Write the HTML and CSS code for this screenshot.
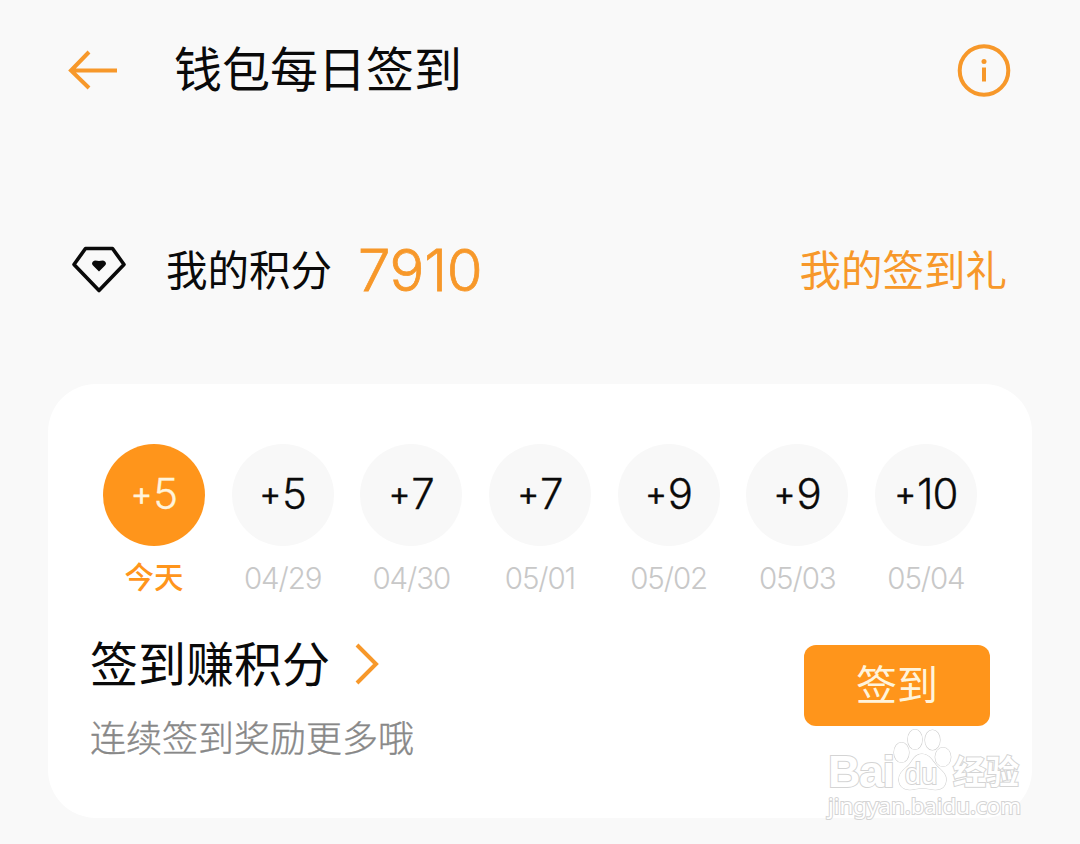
FILE: index.html
```html
<!DOCTYPE html>
<html lang="zh-CN">
<head>
    <meta charset="UTF-8">
    <meta name="viewport" content="width=device-width, initial-scale=1.0">
    <title>钱包每日签到</title>
    <link rel="stylesheet" href="styles.css">
</head>
<body>
    <header class="header">
        <svg class="back" viewBox="0 0 50 40" width="50" height="40">
            <path d="M22 2L4 20.5L22 38M4 20.5H50"/>
        </svg>
        <h1>钱包每日签到</h1>
        <svg class="info" viewBox="0 0 54 54" width="54" height="54">
            <circle cx="27" cy="27.5" r="24.3"/>
            <path d="M27 24.5V38.5"/>
            <circle class="dot" cx="27" cy="18.5" r="2.5"/>
        </svg>
    </header>

    <section class="points">
        <svg class="diamond" viewBox="0 0 56 48" width="56" height="48">
            <path d="M14.5 2.5H41.5L53 18.5L28 44.5L3 18.5Z"/>
            <path class="heart" d="M24 14.5Q26.5 14.5 28 15Q29.5 14.5 32 14.5Q35 15 35 18L34 19.5L28 25.5L22 19.5L21 18Q21 15 24 14.5Z"/>
        </svg>
        <span class="points-label">我的积分</span>
        <span class="points-value">7910</span>
        <a class="gift-link">我的签到礼</a>
    </section>

    <main class="card">
        <ul class="days">
            <li class="day today"><span class="bonus"><span class="plus">+</span>5</span><span class="date">今天</span></li>
            <li class="day"><span class="bonus"><span class="plus">+</span>5</span><span class="date">04/29</span></li>
            <li class="day"><span class="bonus"><span class="plus">+</span>7</span><span class="date">04/30</span></li>
            <li class="day"><span class="bonus"><span class="plus">+</span>7</span><span class="date">05/01</span></li>
            <li class="day"><span class="bonus"><span class="plus">+</span>9</span><span class="date">05/02</span></li>
            <li class="day"><span class="bonus"><span class="plus">+</span>9</span><span class="date">05/03</span></li>
            <li class="day"><span class="bonus"><span class="plus">+</span>10</span><span class="date">05/04</span></li>
        </ul>

        <div class="checkin">
            <div class="checkin-text">
                <h2><span class="title">签到赚积分</span>
                    <svg class="arrow" viewBox="0 0 26 42" width="26" height="42">
                        <path d="M2 2L21 21L2 40"/>
                    </svg>
                </h2>
                <p>连续签到奖励更多哦</p>
            </div>
            <button>签到</button>
        </div>
    </main>

    <div class="watermark">
        <div class="brand">
            <span class="bai">Bai</span>
            <span class="paw">
                <svg viewBox="0 0 60 64" width="60" height="64">
                    <ellipse cx="8.5" cy="24.5" rx="7.5" ry="10"/>
                    <ellipse cx="22" cy="11.5" rx="7.2" ry="10"/>
                    <ellipse cx="39.5" cy="12" rx="7.5" ry="10"/>
                    <ellipse cx="50" cy="29" rx="7.8" ry="9.5"/>
                    <path d="M29 26C22 26 20 32 16 37C12 41 5 45 6 53C7 61 15 63 22 61C27 60 32 60 37 61C45 63 52 61 53 53C54 45 47 42 43 37C39 32 36 26 29 26Z"/>
                </svg>
                <span class="du">du</span>
            </span>
            <span class="jingyan">经验</span>
        </div>
        <div class="site">jingyan.baidu.com</div>
    </div>
</body>
</html>
```

FILE: styles.css
```css
* {
    box-sizing: border-box;
}

body {
    font-family: Inter, 'Noto Sans CJK SC', sans-serif;
    width: 1080px;
    height: 844px;
    margin: 0;
    background-color: #f9f9f9;
    color: #0a0a0a;
    overflow: hidden;
}

svg {
    display: block;
    flex: none;
    fill: none;
    stroke: #f7982a;
    stroke-width: 4;
}

.header {
    display: flex;
    align-items: center;
    height: 140px;
    padding: 0 69px 0 67px;
}

h1,
h2 {
    margin: 0;
    font-family: 'Noto Sans CJK SC', sans-serif;
    font-size: 48px;
    line-height: 64px;
    font-weight: 400;
}

h1 {
    margin-left: 57px;
    padding-bottom: 8px;
}

.info {
    margin-left: auto;
}

.info .dot {
    fill: #f7982a;
    stroke: none;
}

.points {
    display: flex;
    align-items: center;
    height: 60px;
    margin-top: 100px;
    padding: 0 73px 0 71px;
    font-family: 'Noto Sans CJK SC', sans-serif;
    font-size: 41.5px;
    line-height: 60px;
}

.points .diamond {
    stroke: #0a0a0a;
    stroke-width: 3.6;
    stroke-linejoin: round;
}

.diamond .heart {
    fill: #0a0a0a;
    stroke: none;
}

.points-label {
    margin-left: 39px;
    padding-bottom: 4px;
}

.points-value {
    margin-left: 26px;
    font-family: Inter, sans-serif;
    font-size: 58px;
    font-weight: 300;
    letter-spacing: -0.3px;
    color: #f7982a;
    -webkit-text-stroke: 0.8px;
}

.gift-link {
    margin-left: auto;
    padding-bottom: 4px;
    color: #f7982a;
}

.card {
    width: 984px;
    height: 434px;
    margin: 84px auto 0;
    padding: 60px 42px 0;
    background-color: #fff;
    border-radius: 48px;
}

.days {
    display: flex;
    justify-content: space-between;
    margin: 0;
    padding: 0 13px;
    list-style: none;
}

.day {
    display: flex;
    flex-direction: column;
    align-items: center;
    width: 102px;
}

.bonus {
    display: flex;
    align-items: center;
    justify-content: center;
    width: 102px;
    height: 102px;
    padding-bottom: 3px;
    border-radius: 50%;
    background-color: #f8f8f8;
    font-size: 42px;
    font-weight: 300;
    letter-spacing: -1px;
    -webkit-text-stroke: 0.3px;
}

.plus {
    margin-right: 2px;
    padding-bottom: 1px;
    font-size: 33px;
    -webkit-text-stroke: 0.8px;
}

.date {
    height: 40px;
    margin-top: 12px;
    font-size: 29.5px;
    font-weight: 300;
    letter-spacing: -1.1px;
    line-height: 40px;
    color: #c8c8c8;
}

.today .bonus {
    background-color: #ff951b;
    color: #fff4dc;
}

.today .date {
    color: #ff951b;
    font-family: 'Noto Sans CJK SC', sans-serif;
    font-weight: 500;
    letter-spacing: 0;
    line-height: 35px;
}

.checkin {
    display: flex;
    justify-content: space-between;
    margin-top: 34px;
}

h2 {
    display: flex;
    align-items: center;
    gap: 25px;
    height: 64px;
}

.title {
    padding-bottom: 6px;
}

.checkin p {
    margin: 16px 0 0;
    font-family: 'Noto Sans CJK SC', sans-serif;
    font-size: 36px;
    font-weight: 300;
    line-height: 48px;
    color: #888;
    -webkit-text-stroke: 0.4px;
}

button {
    width: 186px;
    height: 81px;
    margin-top: 13px;
    padding: 0 0 6px;
    border: none;
    border-radius: 12px;
    background-color: #ff951b;
    color: #fff4dc;
    font-family: 'Noto Sans CJK SC', sans-serif;
    font-size: 41px;
    line-height: 75px;
}

/* overlaps the corner of the card */
.watermark {
    position: absolute;
    left: 828px;
    top: 728px;
    width: 200px;
    color: #fff;
    -webkit-text-stroke: 2px #d4d4d4;
    paint-order: stroke;
}

.brand {
    display: flex;
    align-items: flex-end;
    height: 64px;
    font-family: 'Liberation Sans', 'Noto Sans CJK SC', sans-serif;
    font-weight: 700;
}

.bai {
    width: 65px;
    font-size: 45px;
    letter-spacing: -1.5px;
    line-height: 41px;
}

.paw {
    position: relative;
    width: 60px;
    height: 64px;
}

.paw svg {
    fill: #fff;
    stroke: #d0d0d0;
    stroke-width: 1.2;
}

.du {
    position: absolute;
    left: 12px;
    bottom: 2px;
    font-size: 29px;
    line-height: 32px;
    font-weight: 400;
}

.jingyan {
    font-size: 33px;
    line-height: 38px;
}

.site {
    font-family: 'Noto Sans', sans-serif;
    font-size: 22.3px;
    line-height: 28px;
}
```
